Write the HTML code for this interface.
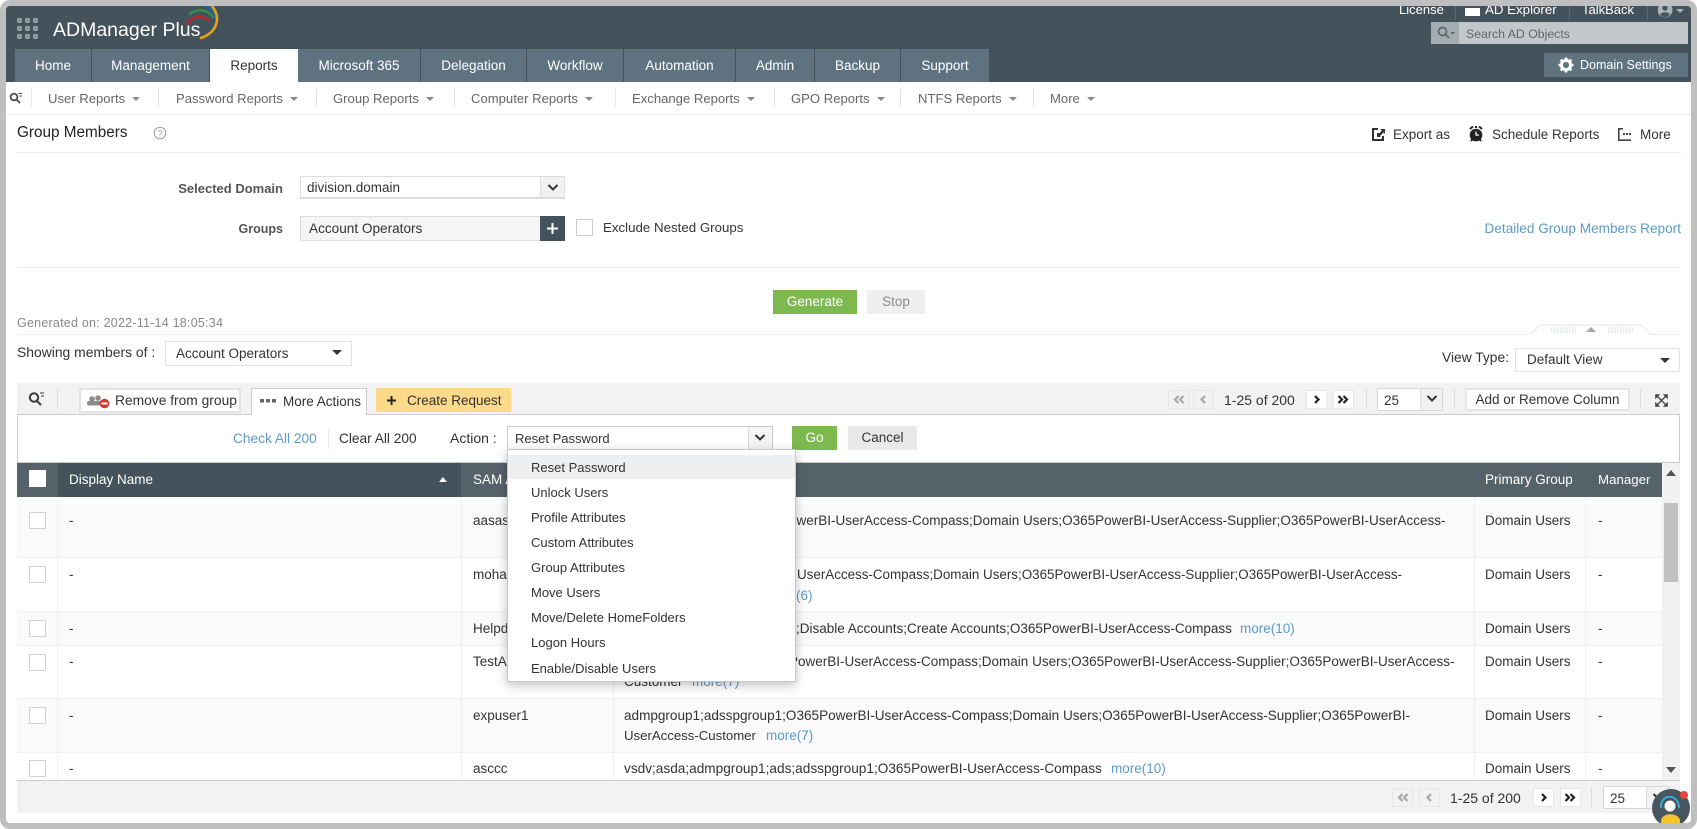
<!DOCTYPE html>
<html><head><meta charset="utf-8"><title>ADManager Plus</title>
<style>
html,body{margin:0;padding:0;width:1697px;height:829px;overflow:hidden;background:#fff}
body{font:13.5px/16px "Liberation Sans",sans-serif;color:#333;position:relative}
div,span.a,svg{position:absolute}
.t{position:absolute;white-space:nowrap;line-height:16px}
.tab{position:absolute;top:49px;height:33px;line-height:34px;background:#5f7280;color:#fff;text-align:center;border-right:1px solid #44525b;box-sizing:border-box}
.sep{position:absolute;width:1px;background:#e6e6e6}
.sub{position:absolute;top:91px;white-space:nowrap;color:#666;font-size:13.1px}
.sub:after{content:"";display:inline-block;margin-left:7px;vertical-align:2px;border:4px solid transparent;border-top:4px solid #8a8a8a;border-bottom:0}
.caret{position:absolute;border-left:5px solid transparent;border-right:5px solid transparent;border-top:5px solid #333}
.btn{position:absolute;box-sizing:border-box;background:#fff;border:1px solid #e3e3e3;text-align:center}
.pg{position:absolute;box-sizing:border-box;width:21px;height:19px;background:#fff;border:1px solid #e6e6e6}
.pg.off{background:#f1f1f1}
.pg svg{left:3px;top:4px;fill:none;stroke:#222;stroke-width:2.2}
.pg.off svg{stroke:#a8a8a8}
.cb{position:absolute;box-sizing:border-box;left:29px;width:17px;height:17px;background:#fff;border:1px solid #d2d2d2}
.row{position:absolute;left:17px;width:1645px;box-sizing:border-box;border-bottom:1px solid #efefef}
.v{position:absolute;width:1px;background:#f0f0f0;top:497px;height:283px}
.lnk{color:#5b9bc9}
.mi{position:absolute;left:23px;white-space:nowrap;line-height:16px;color:#333;font-size:13px}
.chev{fill:none;stroke:#333;stroke-width:2}
.gb{box-sizing:border-box;background:#f1f1f1;border-left:1px solid #ddd}
</style></head><body>

<!-- header -->
<div style="left:6px;top:6px;width:1685px;height:76px;background:#44525b"></div>
<svg style="left:17px;top:18px" width="21" height="21" fill="#8d989f"><rect width="5" height="5"/><rect x="8" width="5" height="5"/><rect x="16" width="5" height="5"/><rect y="8" width="5" height="5"/><rect x="8" y="8" width="5" height="5"/><rect x="16" y="8" width="5" height="5"/><rect y="16" width="5" height="5"/><rect x="8" y="16" width="5" height="5"/><rect x="16" y="16" width="5" height="5"/></svg>
<div class="t" style="left:53px;top:20px;font-size:19.5px;line-height:20px;color:#fff">ADManager Plus</div>
<svg style="left:180px;top:6px" width="44" height="34" fill="none" stroke-linecap="round">
<path d="M7 18C12 10 22 9 29 14" stroke="#b52a32" stroke-width="2.5"/>
<path d="M10 8C17 2 27 3 33 11" stroke="#2f8f4c" stroke-width="2.5"/>
<path d="M25 0C31 2 35 7 36 13" stroke="#2563a8" stroke-width="2.5"/>
<path d="M32 0C41 11 38 26 21 32" stroke="#e3a41c" stroke-width="2.6"/>
</svg>

<div class="tab" style="left:15px;width:77px">Home</div>
<div class="tab" style="left:92px;width:118px">Management</div>
<div class="tab" style="left:210px;width:88px;background:#fff;color:#333;border:0">Reports</div>
<div class="tab" style="left:298px;width:123px">Microsoft 365</div>
<div class="tab" style="left:421px;width:106px">Delegation</div>
<div class="tab" style="left:527px;width:97px">Workflow</div>
<div class="tab" style="left:624px;width:112px">Automation</div>
<div class="tab" style="left:736px;width:79px">Admin</div>
<div class="tab" style="left:815px;width:86px">Backup</div>
<div class="tab" style="left:901px;width:88px;border:0">Support</div>

<div class="t" style="left:1399px;top:2px;color:#fff;font-size:13px">License</div>
<div class="sep" style="left:1455px;top:6px;height:14px;background:#5d6a72"></div>
<div style="left:1465px;top:8px;width:15px;height:8px;background:#fff"></div>
<div class="t" style="left:1485px;top:2px;color:#fff;font-size:13.3px">AD Explorer</div>
<div class="sep" style="left:1569px;top:6px;height:14px;background:#5d6a72"></div>
<div class="t" style="left:1582px;top:2px;color:#fff;font-size:13px">TalkBack</div>
<div class="sep" style="left:1647px;top:6px;height:14px;background:#5d6a72"></div>
<svg style="left:1658px;top:6px" width="32" height="12"><circle cx="7" cy="4" r="7.5" fill="#aab3b8"/><circle cx="7" cy="2" r="2.6" fill="#44525b"/><path d="M2 8.5C4 5.5 10 5.5 12 8.500L9 11H5Z" fill="#44525b"/><path d="M18 3H26L22 7Z" fill="#aab3b8"/></svg>

<div style="left:1431px;top:22px;width:257px;height:22px;background:#c2c7ca"></div>
<div style="left:1431px;top:22px;width:28px;height:22px;background:#a4adb2"></div>
<svg style="left:1436px;top:25px" width="20" height="16" fill="none" stroke="#56636b" stroke-width="1.7"><circle cx="6.5" cy="6.5" r="4"/><path d="M9.5 9.5L13 13"/><path d="M14.5 7H19L16.7 9.5Z" fill="#56636b" stroke="none"/></svg>
<div class="t" style="left:1466px;top:26px;color:#5d676d;font-size:12.3px">Search AD Objects</div>

<div style="left:1544px;top:53px;width:144px;height:24px;background:#607480"></div>
<svg style="left:1558px;top:57px" width="16" height="16" viewBox="0 0 16 16"><circle cx="8" cy="8" r="4.6" fill="none" stroke="#fff" stroke-width="3"/><g stroke="#fff" stroke-width="2.6"><path d="M8 .5V3M8 13V15.5M.5 8H3M13 8H15.5M2.7 2.7L4.5 4.500M11.500 11.500L13.300 13.300M13.300 2.700L11.500 4.500M4.500 11.500L2.700 13.300"/></g></svg>
<div class="t" style="left:1580px;top:57px;color:#fff;font-size:12.5px">Domain Settings</div>

<!-- sub nav -->
<svg style="left:9px;top:92px" width="14" height="13" fill="none" stroke="#4a4a4a" stroke-width="1.8"><circle cx="5" cy="5" r="3.4"/><path d="M7.5 7.500L11 11"/><path d="M9.500 1.500H13M10.500 4H13" stroke-width="1"/></svg>
<div class="sep" style="left:31px;top:88px;height:20px"></div>
<div class="sub" style="left:48px">User Reports</div>
<div class="sep" style="left:158px;top:88px;height:20px"></div>
<div class="sub" style="left:176px">Password Reports</div>
<div class="sep" style="left:316px;top:88px;height:20px"></div>
<div class="sub" style="left:333px">Group Reports</div>
<div class="sep" style="left:454px;top:88px;height:20px"></div>
<div class="sub" style="left:471px">Computer Reports</div>
<div class="sep" style="left:615px;top:88px;height:20px"></div>
<div class="sub" style="left:632px">Exchange Reports</div>
<div class="sep" style="left:774px;top:88px;height:20px"></div>
<div class="sub" style="left:791px">GPO Reports</div>
<div class="sep" style="left:900px;top:88px;height:20px"></div>
<div class="sub" style="left:918px">NTFS Reports</div>
<div class="sep" style="left:1033px;top:88px;height:20px"></div>
<div class="sub" style="left:1050px">More</div>
<div style="left:6px;top:114px;width:1685px;height:1px;background:#ececec"></div>

<!-- title row -->
<div class="t" style="left:17px;top:125px;font-size:15.3px;color:#222">Group Members</div>
<svg style="left:153px;top:126px" width="14" height="14" fill="none" stroke="#999"><circle cx="7" cy="7" r="5.8"/><text x="7" y="10.5" font-size="9" fill="#999" stroke="none" text-anchor="middle" font-family="Liberation Sans">?</text></svg>
<svg style="left:1371px;top:127px" width="14" height="15"><path d="M1 1H7V3H3V12H11V9H13V14H1Z" fill="#333"/><path d="M6 10L6 6H8.500L7.400 7.200 11 3.500 9 2H14V7L12.600 5.400 8.800 9.200 10 10Z" fill="#333"/></svg>
<div class="t" style="left:1393px;top:127px">Export as</div>
<svg style="left:1468px;top:125px" width="16" height="18"><circle cx="8" cy="10" r="6.3" fill="#222"/><path d="M8 6.500V10H11" stroke="#fff" fill="none" stroke-width="1.3"/><path d="M2 4L5 1.500M14 4L11 1.500M8 1V3M3 16L4.500 14M13 16L11.500 14" stroke="#222" stroke-width="2"/></svg>
<div class="t" style="left:1492px;top:127px">Schedule Reports</div>
<svg style="left:1618px;top:128px" width="13" height="13" fill="#444"><path d="M0 0H5V1.600H1.600V11.400H13V13H0Z"/><rect x="5" y="5" width="2" height="2"/><rect x="8" y="5" width="2" height="2"/><rect x="11" y="5" width="2" height="2"/></svg>
<div class="t" style="left:1640px;top:127px">More</div>
<div style="left:17px;top:152px;width:1664px;height:1px;background:#ececec"></div>

<!-- form -->
<div class="t" style="right:1414px;top:181px;font-weight:bold;color:#555;font-size:13px">Selected Domain</div>
<div style="left:300px;top:176px;width:265px;height:23px;box-sizing:border-box;background:#fff;border:1px solid #dcdcdc;border-bottom:2px solid #dcdcdc"></div>
<div class="t" style="left:307px;top:180px">division.domain</div>
<div class="gb" style="left:540px;top:177px;width:24px;height:20px"></div>
<svg class="chev" style="left:547px;top:184px" width="12" height="8"><path d="M1.500 1L6 5.500 10.500 1"/></svg>

<div class="t" style="right:1414px;top:221px;font-weight:bold;color:#555;font-size:12.5px">Groups</div>
<div style="left:300px;top:216px;width:241px;height:25px;box-sizing:border-box;background:#f5f5f5;border:1px solid #dcdcdc"></div>
<div class="t" style="left:309px;top:221px;font-size:13.6px">Account Operators</div>
<div style="left:540px;top:216px;width:25px;height:25px;background:#44525b"></div>
<svg style="left:546px;top:222px" width="13" height="13" stroke="#fff" stroke-width="2"><path d="M6.500 1V12M1 6.500H12"/></svg>
<div style="left:576px;top:219px;width:17px;height:17px;box-sizing:border-box;background:#fff;border:1px solid #ccc"></div>
<div class="t" style="left:603px;top:220px;font-size:13.3px">Exclude Nested Groups</div>
<div class="t lnk" style="right:16px;top:221px;font-size:13.6px">Detailed Group Members Report</div>
<div style="left:17px;top:267px;width:1664px;height:1px;background:#ececec"></div>

<div style="left:773px;top:290px;width:84px;height:24px;background:#7eb94f;color:#fff;text-align:center;line-height:24px">Generate</div>
<div style="left:867px;top:290px;width:58px;height:24px;background:#efefef;color:#8a8a8a;text-align:center;line-height:24px">Stop</div>

<div class="t" style="left:17px;top:315px;color:#888;font-size:12.5px;letter-spacing:.23px">Generated on: 2022-11-14 18:05:34</div>
<div style="left:17px;top:334px;width:1664px;height:1px;background:#ececec"></div>
<svg style="left:1530px;top:324px" width="122" height="11" fill="none"><path d="M0 11L10 1H111L121 11" stroke="#e6e6e6" fill="#fff"/><path d="M56 8L61 3L66 8Z" fill="#9aa"/><path d="M21 4H46M21 6H46M21 8H46M78 4H103M78 6H103M78 8H103" stroke="#cfd3d6" stroke-dasharray="1.5 1.5"/></svg>

<div class="t" style="left:17px;top:344px;font-size:13.9px">Showing members of :</div>
<div style="left:165px;top:341px;width:187px;height:25px;box-sizing:border-box;border:1px solid #e2e2e2;background:#fff"></div>
<div class="t" style="left:176px;top:346px">Account Operators</div>
<div class="caret" style="left:332px;top:350px"></div>

<div class="t" style="left:1442px;top:350px;font-size:13.8px">View Type:</div>
<div style="left:1515px;top:348px;width:165px;height:24px;box-sizing:border-box;border:1px solid #e2e2e2;background:#fff"></div>
<div class="t" style="left:1527px;top:352px">Default View</div>
<div class="caret" style="left:1660px;top:358px"></div>

<!-- toolbar -->
<div style="left:17px;top:383px;width:1663px;height:31px;background:#f2f2f2"></div>
<svg style="left:27px;top:391px" width="18" height="16" fill="none" stroke="#3a3a3a" stroke-width="2"><circle cx="7" cy="6.500" r="4.200"/><path d="M10 10L14 14"/><path d="M13 2H17M14 5H17" stroke-width="1"/></svg>
<div class="sep" style="left:57px;top:389px;height:20px;background:#dcdcdc"></div>
<div class="btn" style="left:79px;top:388px;width:162px;height:25px;border-width:2px"></div>
<svg style="left:86px;top:393px" width="24" height="16"><g fill="#8b8b8b"><circle cx="6" cy="6" r="2.800"/><circle cx="12" cy="5" r="2.800"/><rect x="1" y="8" width="17" height="4.500" rx="2"/></g><circle cx="18.500" cy="10.500" r="4.800" fill="#e0322f"/><rect x="15.500" y="9.500" width="6" height="2" fill="#fff"/></svg>
<div class="t" style="left:115px;top:393px;font-size:13.8px">Remove from group</div>
<div style="left:251px;top:388px;width:116px;height:27px;box-sizing:border-box;background:#fff;border:1px solid #ccc;border-bottom:0;z-index:2"></div>
<svg style="left:260px;top:399px;z-index:3" width="16" height="4" fill="#666"><rect width="4" height="3.500"/><rect x="6" width="4" height="3.500"/><rect x="12" width="4" height="3.500"/></svg>
<div class="t" style="left:283px;top:394px;z-index:3">More Actions</div>
<div style="left:376px;top:388px;width:135px;height:24px;background:#fdd98a;border:0"></div>
<svg style="left:386px;top:395px" width="11" height="11" stroke="#222" stroke-width="2"><path d="M5.500 1V10M1 5.500H10"/></svg>
<div class="t" style="left:407px;top:393px">Create Request</div>

<div class="pg off" style="left:1168px;top:390px"><svg width="13" height="9"><path d="M6.500 1L3 4.500 6.500 8M11.500 1L8 4.500 11.500 8"/></svg></div>
<div class="pg off" style="left:1193px;top:390px"><svg width="13" height="9"><path d="M8 1L4.500 4.500 8 8"/></svg></div>
<div class="t" style="left:1224px;top:392px;font-size:14px">1-25 of 200</div>
<div class="pg" style="left:1306px;top:390px"><svg width="13" height="9"><path d="M5 1L8.500 4.500 5 8"/></svg></div>
<div class="pg" style="left:1333px;top:390px"><svg width="13" height="9"><path d="M1.500 1L5 4.500 1.500 8M6.500 1L10 4.500 6.500 8"/></svg></div>
<div class="sep" style="left:1366px;top:389px;height:20px;background:#dcdcdc"></div>
<div style="left:1377px;top:388px;width:66px;height:23px;box-sizing:border-box;background:#fff;border:1px solid #d8d8d8"></div>
<div class="gb" style="left:1420px;top:389px;width:22px;height:21px"></div>
<div class="t" style="left:1384px;top:393px">25</div>
<svg class="chev" style="left:1426px;top:395px" width="12" height="8"><path d="M1.500 1L6 5.500 10.500 1"/></svg>
<div class="sep" style="left:1454px;top:389px;height:20px;background:#dcdcdc"></div>
<div class="btn" style="left:1465px;top:388px;width:165px;height:23px;line-height:19px;border-width:2px;border-color:#e6e6e6">Add or Remove Column</div>
<div class="sep" style="left:1640px;top:389px;height:20px;background:#dcdcdc"></div>
<svg style="left:1655px;top:394px" width="13" height="13" fill="#444" stroke="#444"><path d="M2.500 2.500L10.500 10.500M10.500 2.500L2.500 10.500" fill="none" stroke-width="1.300"/><path d="M.5 .5H4.500L.5 4.500ZM12.500 .5H8.500L12.500 4.500ZM.5 12.500H4.500L.5 8.500ZM12.500 12.500H8.500L12.500 8.500Z" stroke-width=".6"/></svg>

<!-- action panel -->
<div style="left:17px;top:414px;width:1663px;height:49px;box-sizing:border-box;background:#fff;border:1px solid #ccc;border-bottom:1px solid #ccc"></div>
<div style="left:252px;top:413px;width:114px;height:3px;background:#fff;z-index:2"></div>
<div class="t lnk" style="left:233px;top:431px;font-size:13.7px">Check All 200</div>
<div class="sep" style="left:328px;top:429px;height:20px"></div>
<div class="t" style="left:339px;top:431px;font-size:13.7px">Clear All 200</div>
<div class="t" style="left:450px;top:430px;font-size:14px">Action :</div>
<div style="left:507px;top:426px;width:266px;height:24px;box-sizing:border-box;background:#fff;border:1px solid #ccc"></div>
<div class="gb" style="left:748px;top:427px;width:24px;height:22px;background:#f4f4f4"></div>
<div class="t" style="left:515px;top:431px;font-size:13px">Reset Password</div>
<svg class="chev" style="left:754px;top:434px" width="12" height="8"><path d="M1.500 1L6 5.500 10.500 1"/></svg>
<div style="left:792px;top:426px;width:45px;height:24px;background:#7eb94f;color:#fff;text-align:center;line-height:24px">Go</div>
<div style="left:848px;top:426px;width:69px;height:24px;background:#e9e9e9;color:#333;text-align:center;line-height:24px">Cancel</div>

<!-- table header -->
<div style="left:17px;top:463px;width:1645px;height:34px;background:#566269"></div>
<div style="left:58px;top:463px;width:403px;height:34px;background:#44525b"></div>
<div style="left:29px;top:470px;width:17px;height:17px;background:#fff"></div>
<div class="t" style="left:69px;top:472px;color:#fff">Display Name</div>
<svg style="left:439px;top:477px" width="8" height="5"><path d="M0 5L4 0 8 5Z" fill="#fff"/></svg>
<div class="t" style="left:473px;top:472px;color:#fff">SAM Account Name</div>
<div class="t" style="left:1485px;top:472px;color:#fff">Primary Group</div>
<div class="t" style="left:1598px;top:472px;color:#fff;font-size:13.3px">Manager</div>

<!-- rows -->
<div style="left:17px;top:497px;width:1645px;height:7px;background:#fff;border-bottom:1px solid #efefef"></div>
<div class="row" style="top:504px;height:54px;background:#fafafa"></div>
<div class="row" style="top:558px;height:54px;background:#fff"></div>
<div class="row" style="top:612px;height:34px;background:#fafafa"></div>
<div class="row" style="top:646px;height:53px;background:#fff"></div>
<div class="row" style="top:699px;height:54px;background:#fafafa"></div>
<div class="row" style="top:753px;height:27px;background:#fff;border:0"></div>
<div class="v" style="left:57px"></div><div class="v" style="left:461px"></div><div class="v" style="left:613px"></div><div class="v" style="left:1474px"></div><div class="v" style="left:1585px"></div>

<div class="cb" style="top:512px"></div><div class="cb" style="top:566px"></div><div class="cb" style="top:620px"></div><div class="cb" style="top:654px"></div><div class="cb" style="top:707px"></div><div class="cb" style="top:760px"></div>

<div class="t" style="left:69px;top:513px">-</div><div class="t" style="left:69px;top:567px">-</div><div class="t" style="left:69px;top:621px">-</div><div class="t" style="left:69px;top:654px">-</div><div class="t" style="left:69px;top:708px">-</div><div class="t" style="left:69px;top:761px">-</div>

<div class="t" style="left:473px;top:513px">aasasa</div>
<div class="t" style="left:473px;top:567px">mohan</div>
<div class="t" style="left:473px;top:621px">Helpdesk</div>
<div class="t" style="left:473px;top:654px">TestAcc</div>
<div class="t" style="left:473px;top:708px">expuser1</div>
<div class="t" style="left:473px;top:761px">asccc</div>

<div class="t" style="left:789px;top:513px">owerBI-UserAccess-Compass;Domain Users;O365PowerBI-UserAccess-Supplier;O365PowerBI-UserAccess-</div>
<div class="t" style="left:797px;top:567px;font-size:13.4px">UserAccess-Compass;Domain Users;O365PowerBI-UserAccess-Supplier;O365PowerBI-UserAccess-</div>
<div class="t lnk" style="left:796px;top:588px">(6)</div>
<div class="t" style="left:796px;top:621px">;Disable Accounts;Create Accounts;O365PowerBI-UserAccess-Compass</div>
<div class="t lnk" style="left:1240px;top:621px">more(10)</div>
<div class="t" style="left:789px;top:654px">PowerBI-UserAccess-Compass;Domain Users;O365PowerBI-UserAccess-Supplier;O365PowerBI-UserAccess-</div>
<div class="t" style="left:624px;top:674px">Customer</div><div class="t lnk" style="left:692px;top:674px">more(7)</div>
<div class="t" style="left:624px;top:708px;font-size:13.55px">admpgroup1;adsspgroup1;O365PowerBI-UserAccess-Compass;Domain Users;O365PowerBI-UserAccess-Supplier;O365PowerBI-</div>
<div class="t" style="left:624px;top:728px;font-size:13.2px">UserAccess-Customer</div><div class="t lnk" style="left:766px;top:728px">more(7)</div>
<div class="t" style="left:624px;top:761px;font-size:13.63px">vsdv;asda;admpgroup1;ads;adsspgroup1;O365PowerBI-UserAccess-Compass</div>
<div class="t lnk" style="left:1111px;top:761px">more(10)</div>

<div class="t" style="left:1485px;top:513px">Domain Users</div><div class="t" style="left:1485px;top:567px">Domain Users</div><div class="t" style="left:1485px;top:621px">Domain Users</div><div class="t" style="left:1485px;top:654px">Domain Users</div><div class="t" style="left:1485px;top:708px">Domain Users</div><div class="t" style="left:1485px;top:761px">Domain Users</div>
<div class="t" style="left:1598px;top:513px">-</div><div class="t" style="left:1598px;top:567px">-</div><div class="t" style="left:1598px;top:621px">-</div><div class="t" style="left:1598px;top:654px">-</div><div class="t" style="left:1598px;top:708px">-</div><div class="t" style="left:1598px;top:761px">-</div>

<!-- scrollbar -->
<div style="left:1662px;top:463px;width:18px;height:317px;background:#f1f1f1"></div>
<svg style="left:1666px;top:470px" width="10" height="6"><path d="M0 6L5 0 10 6Z" fill="#555"/></svg>
<div style="left:1664px;top:503px;width:14px;height:79px;background:#c1c1c1"></div>
<svg style="left:1666px;top:767px" width="10" height="6"><path d="M0 0L5 6 10 0Z" fill="#555"/></svg>

<!-- footer -->
<div style="left:17px;top:780px;width:1663px;height:33px;background:#f2f2f2;border-top:1px solid #ccc;box-sizing:border-box"></div>
<div class="pg off" style="left:1392px;top:788px"><svg width="13" height="9"><path d="M6.500 1L3 4.500 6.500 8M11.500 1L8 4.500 11.500 8"/></svg></div>
<div class="pg off" style="left:1419px;top:788px"><svg width="13" height="9"><path d="M8 1L4.500 4.500 8 8"/></svg></div>
<div class="t" style="left:1450px;top:790px;font-size:14px">1-25 of 200</div>
<div class="pg" style="left:1533px;top:788px"><svg width="13" height="9"><path d="M5 1L8.500 4.500 5 8"/></svg></div>
<div class="pg" style="left:1560px;top:788px"><svg width="13" height="9"><path d="M1.500 1L5 4.500 1.500 8M6.500 1L10 4.500 6.500 8"/></svg></div>
<div class="sep" style="left:1591px;top:787px;height:20px;background:#dcdcdc"></div>
<div style="left:1603px;top:786px;width:67px;height:23px;box-sizing:border-box;background:#fff;border:1px solid #d8d8d8"></div>
<div class="gb" style="left:1646px;top:787px;width:23px;height:21px"></div>
<svg class="chev" style="left:1652px;top:793px" width="12" height="8"><path d="M1.500 1L6 5.500 10.500 1"/></svg>
<div class="t" style="left:1610px;top:791px">25</div>

<!-- dropdown -->
<div style="left:507px;top:449px;width:289px;height:233px;box-sizing:border-box;background:#fff;border:1px solid #c8c8c8;box-shadow:0 3px 10px rgba(0,0,0,.25);z-index:5">
<div style="left:0;top:5px;width:287px;height:24px;background:#eeeff0"></div>
<div class="mi" style="top:10px">Reset Password</div>
<div class="mi" style="top:35px">Unlock Users</div>
<div class="mi" style="top:60px">Profile Attributes</div>
<div class="mi" style="top:85px">Custom Attributes</div>
<div class="mi" style="top:110px">Group Attributes</div>
<div class="mi" style="top:135px">Move Users</div>
<div class="mi" style="top:160px">Move/Delete HomeFolders</div>
<div class="mi" style="top:185px">Logon Hours</div>
<div class="mi" style="top:211px">Enable/Disable Users</div>
</div>

<!-- chat bubble -->
<svg style="left:1651px;top:788px;z-index:6" width="42" height="41">
<circle cx="20" cy="20" r="19" fill="#47555e"/>
<path d="M10 20C9 5 28 5 28 20" fill="none" stroke="#35b3e8" stroke-width="1.800"/>
<circle cx="19" cy="18" r="5.500" fill="#fff"/>
<path d="M10 33C10 24 29 24 29 33V36H10Z" fill="#f2c230"/>
<circle cx="33" cy="7" r="4" fill="#e8433c"/>
</svg>

<!-- frame -->
<div style="left:0;top:0;width:1697px;height:829px;box-sizing:border-box;border:6px solid #bfbfbf;border-radius:10px;z-index:9"></div>
</body></html>
